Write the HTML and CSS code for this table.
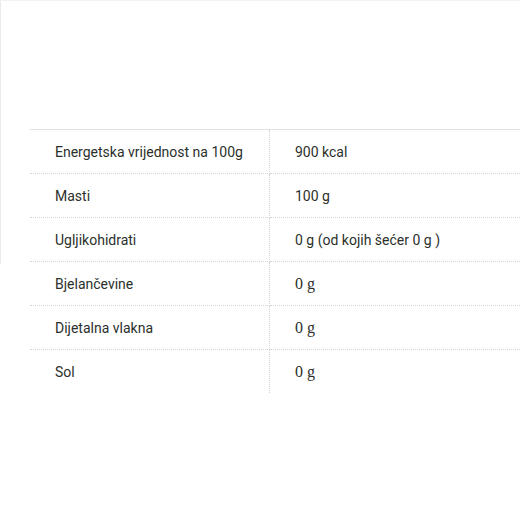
FILE: index.html
```html
<!DOCTYPE html>
<html lang="hr">
<head>
<meta charset="utf-8">
<link rel="stylesheet" href="styles.css">
</head>
<body>
<div class="panel">
  <table class="nutri">
    <tr><td class="k">Energetska vrijednost na 100g</td><td class="v">900 kcal</td></tr>
    <tr><td class="k">Masti</td><td class="v">100 g</td></tr>
    <tr><td class="k">Ugljikohidrati</td><td class="v">0 g (od kojih šećer 0 g )</td></tr>
    <tr><td class="k">Bjelančevine</td><td class="v"><span class="serif">0 g</span></td></tr>
    <tr><td class="k">Dijetalna vlakna</td><td class="v"><span class="serif">0 g</span></td></tr>
    <tr class="last"><td class="k">Sol</td><td class="v"><span class="serif">0 g</span></td></tr>
  </table>
</div>
</body>
</html>
```
FILE: styles.css
```css
html, body {
  margin: 0;
  padding: 0;
  background: #fff;
}
body {
  font-family: Roboto, sans-serif;
  color: #2b302b;
}
.panel {
  border-top: 1px solid #f2f2f2;
  background: linear-gradient(#ebebeb, #ebebeb) 0 0 / 1px 263px no-repeat;
  padding: 128px 0 0 30px;
}
.nutri {
  border-collapse: collapse;
  width: 490px;
  border-top: 1px solid #e2e2e2;
  font-size: 14px;
}
.nutri td {
  height: 43px;
  padding: 0;
  border-bottom: 1px dotted #d6d6d6;
  vertical-align: middle;
}
.nutri tr.last td {
  border-bottom: none;
}
.k {
  width: 214px;
  padding-left: 25px !important;
  border-right: 1px dotted #d6d6d6;
}
.v {
  padding-left: 25px !important;
}
.serif {
  font-family: "Liberation Serif", serif;
  font-size: 16px;
}
```
